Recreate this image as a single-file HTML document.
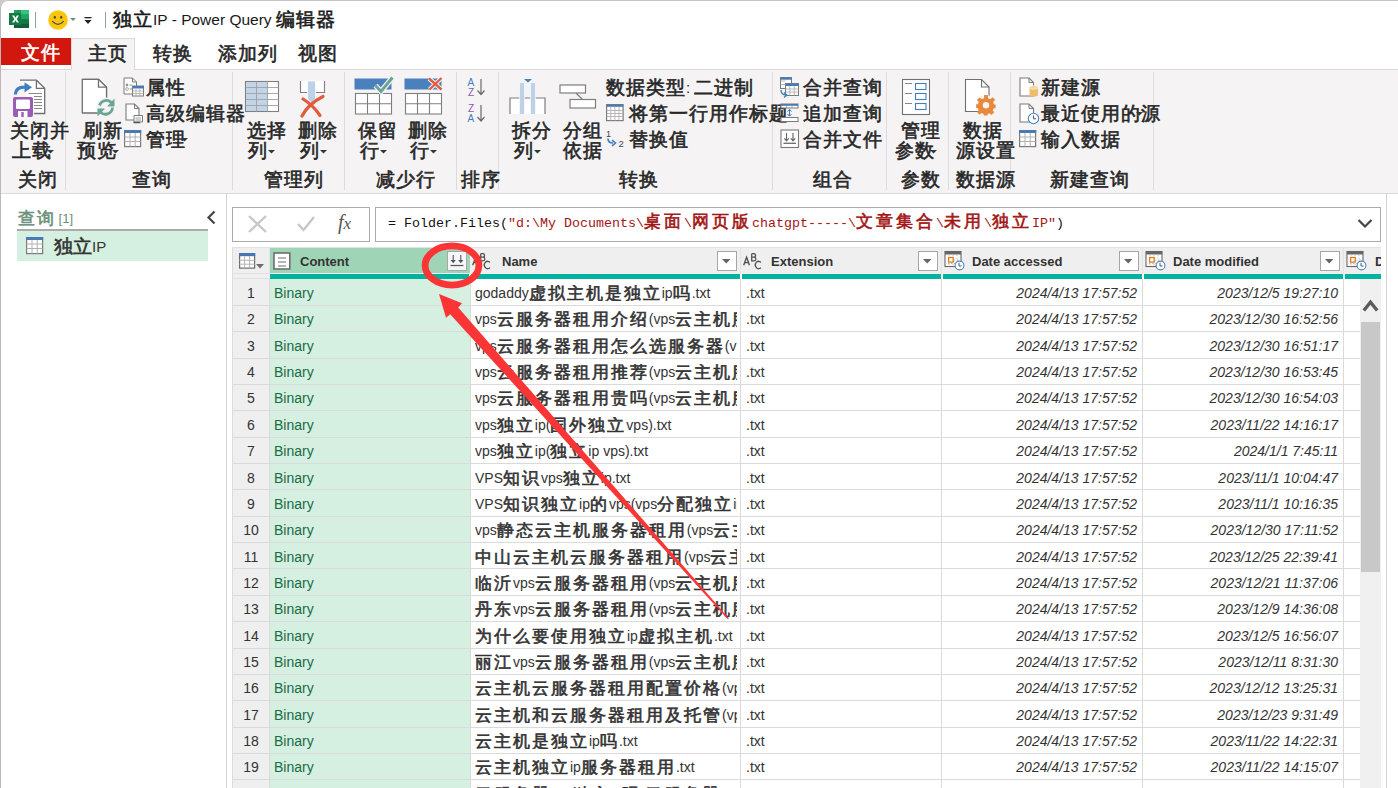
<!DOCTYPE html>
<html><head><meta charset="utf-8"><title>Power Query</title>
<style>
html,body{margin:0;padding:0;width:1398px;height:788px;overflow:hidden;background:#fff}
body{position:relative;font-family:"Liberation Sans",sans-serif}
svg{display:block}
</style></head><body>
<div style="position:absolute;left:0;top:0;width:12px;height:12px;background:#c9c9c9"></div>
<div style="position:absolute;left:0;top:0;width:1398px;height:788px;background:#fff;border-top-left-radius:8px"></div>
<svg style="position:absolute;left:9px;top:10px;" width="21" height="19" viewBox="0 0 21 19">
<rect x="5" y="0" width="15" height="18" fill="#1e9e5c"/>
<rect x="12" y="0" width="8" height="4.5" fill="#33c481"/>
<rect x="12" y="4.5" width="8" height="4.5" fill="#21a366"/>
<rect x="12" y="9" width="8" height="4.5" fill="#107c41"/>
<rect x="5" y="13.5" width="15" height="4.5" fill="#185c37"/>
<rect x="0" y="3" width="12" height="12" fill="#107c41"/>
<path d="M3 5.5h2.2l1.3 2.3 1.3-2.3h2.2l-2.3 3.5 2.3 3.5h-2.2l-1.3-2.3-1.3 2.3h-2.2l2.3-3.5z" fill="#fff"/>
</svg>
<div style="position:absolute;left:35px;top:12px;width:1px;height:16px;background:#8aa39a"></div>
<svg style="position:absolute;left:48px;top:10px;" width="30" height="21" viewBox="0 0 30 21">
<circle cx="10" cy="10" r="9.8" fill="#fdc60e"/>
<ellipse cx="6.8" cy="7.2" rx="1.1" ry="1.5" fill="#4a4a4a"/>
<ellipse cx="13.2" cy="7.2" rx="1.1" ry="1.5" fill="#4a4a4a"/>
<path d="M4.2 11.2 Q10 17.5 15.8 11.2" stroke="#4a4a4a" stroke-width="1.2" fill="none"/>
<path d="M22 8h6l-3 3z" fill="#6f8f80"/>
</svg>
<svg style="position:absolute;left:84px;top:16px;" width="9" height="9" viewBox="0 0 9 9"><rect x="0.5" y="1" width="7" height="1.3" fill="#222"/><path d="M0.5 4H7.5L4 8Z" fill="#222"/></svg>
<div style="position:absolute;left:105px;top:12px;width:1px;height:16px;background:#8aa39a"></div>
<div style="position:absolute;left:113px;top:12px;white-space:nowrap;font-size:15.5px;line-height:15.5px;color:#1a1a1a;"><span style="font-family:'Liberation Sans',sans-serif;font-style:normal;font-size:18.6667px;line-height:0;letter-spacing:1.00px;vertical-align:-1px;-webkit-text-stroke:0.6px currentColor;">独立</span>IP - Power Query <span style="font-family:'Liberation Sans',sans-serif;font-style:normal;font-size:18.6667px;line-height:0;letter-spacing:1.00px;vertical-align:-1px;-webkit-text-stroke:0.6px currentColor;">编辑器</span></div>
<div style="position:absolute;left:1px;top:38px;width:70px;height:27px;background:#d2170f"></div>
<div style="position:absolute;left:21px;top:45px;white-space:nowrap;font-size:15px;line-height:15px;color:#fff;"><span style="font-family:'Liberation Sans',sans-serif;font-style:normal;font-size:18.6667px;line-height:0;letter-spacing:1.00px;vertical-align:-1px;-webkit-text-stroke:0.6px currentColor;">文件</span></div>
<div style="position:absolute;left:71px;top:38px;width:64px;height:32px;background:#f5f3f4;border:1px solid #dadada;border-bottom:none;box-sizing:border-box"></div>
<div style="position:absolute;left:88px;top:46px;white-space:nowrap;font-size:15px;line-height:15px;color:#262626;"><span style="font-family:'Liberation Sans',sans-serif;font-style:normal;font-size:18.6667px;line-height:0;letter-spacing:1.00px;vertical-align:-1px;-webkit-text-stroke:0.6px currentColor;">主页</span></div>
<div style="position:absolute;left:153px;top:46px;white-space:nowrap;font-size:15px;line-height:15px;color:#262626;"><span style="font-family:'Liberation Sans',sans-serif;font-style:normal;font-size:18.6667px;line-height:0;letter-spacing:1.00px;vertical-align:-1px;-webkit-text-stroke:0.6px currentColor;">转换</span></div>
<div style="position:absolute;left:218px;top:46px;white-space:nowrap;font-size:15px;line-height:15px;color:#262626;"><span style="font-family:'Liberation Sans',sans-serif;font-style:normal;font-size:18.6667px;line-height:0;letter-spacing:1.00px;vertical-align:-1px;-webkit-text-stroke:0.6px currentColor;">添加列</span></div>
<div style="position:absolute;left:298px;top:46px;white-space:nowrap;font-size:15px;line-height:15px;color:#262626;"><span style="font-family:'Liberation Sans',sans-serif;font-style:normal;font-size:18.6667px;line-height:0;letter-spacing:1.00px;vertical-align:-1px;-webkit-text-stroke:0.6px currentColor;">视图</span></div>
<div style="position:absolute;left:0px;top:69px;width:1398px;height:125px;background:#f5f3f4;border-top:1px solid #dadada;border-bottom:1px solid #dadada;box-sizing:border-box"></div>
<div style="position:absolute;left:71px;top:69px;width:64px;height:1px;background:#f5f3f4;border-left:1px solid #dadada;border-right:1px solid #dadada;box-sizing:border-box"></div>
<div style="position:absolute;left:65px;top:72px;width:1px;height:118px;background:#dddbdc"></div>
<div style="position:absolute;left:232px;top:72px;width:1px;height:118px;background:#dddbdc"></div>
<div style="position:absolute;left:344px;top:72px;width:1px;height:118px;background:#dddbdc"></div>
<div style="position:absolute;left:456px;top:72px;width:1px;height:118px;background:#dddbdc"></div>
<div style="position:absolute;left:498px;top:72px;width:1px;height:118px;background:#dddbdc"></div>
<div style="position:absolute;left:772px;top:72px;width:1px;height:118px;background:#dddbdc"></div>
<div style="position:absolute;left:886px;top:72px;width:1px;height:118px;background:#dddbdc"></div>
<div style="position:absolute;left:948px;top:72px;width:1px;height:118px;background:#dddbdc"></div>
<div style="position:absolute;left:1010px;top:72px;width:1px;height:118px;background:#dddbdc"></div>
<div style="position:absolute;left:1153px;top:72px;width:1px;height:118px;background:#dddbdc"></div>
<div style="position:absolute;left:18px;top:172px;white-space:nowrap;font-size:15px;line-height:15px;color:#262626;"><span style="font-family:'Liberation Sans',sans-serif;font-style:normal;font-size:18.6667px;line-height:0;letter-spacing:1.00px;vertical-align:-1px;-webkit-text-stroke:0.6px currentColor;">关闭</span></div>
<div style="position:absolute;left:132px;top:172px;white-space:nowrap;font-size:15px;line-height:15px;color:#262626;"><span style="font-family:'Liberation Sans',sans-serif;font-style:normal;font-size:18.6667px;line-height:0;letter-spacing:1.00px;vertical-align:-1px;-webkit-text-stroke:0.6px currentColor;">查询</span></div>
<div style="position:absolute;left:264px;top:172px;white-space:nowrap;font-size:15px;line-height:15px;color:#262626;"><span style="font-family:'Liberation Sans',sans-serif;font-style:normal;font-size:18.6667px;line-height:0;letter-spacing:1.00px;vertical-align:-1px;-webkit-text-stroke:0.6px currentColor;">管理列</span></div>
<div style="position:absolute;left:376px;top:172px;white-space:nowrap;font-size:15px;line-height:15px;color:#262626;"><span style="font-family:'Liberation Sans',sans-serif;font-style:normal;font-size:18.6667px;line-height:0;letter-spacing:1.00px;vertical-align:-1px;-webkit-text-stroke:0.6px currentColor;">减少行</span></div>
<div style="position:absolute;left:461px;top:172px;white-space:nowrap;font-size:15px;line-height:15px;color:#262626;"><span style="font-family:'Liberation Sans',sans-serif;font-style:normal;font-size:18.6667px;line-height:0;letter-spacing:1.00px;vertical-align:-1px;-webkit-text-stroke:0.6px currentColor;">排序</span></div>
<div style="position:absolute;left:619px;top:172px;white-space:nowrap;font-size:15px;line-height:15px;color:#262626;"><span style="font-family:'Liberation Sans',sans-serif;font-style:normal;font-size:18.6667px;line-height:0;letter-spacing:1.00px;vertical-align:-1px;-webkit-text-stroke:0.6px currentColor;">转换</span></div>
<div style="position:absolute;left:813px;top:172px;white-space:nowrap;font-size:15px;line-height:15px;color:#262626;"><span style="font-family:'Liberation Sans',sans-serif;font-style:normal;font-size:18.6667px;line-height:0;letter-spacing:1.00px;vertical-align:-1px;-webkit-text-stroke:0.6px currentColor;">组合</span></div>
<div style="position:absolute;left:901px;top:172px;white-space:nowrap;font-size:15px;line-height:15px;color:#262626;"><span style="font-family:'Liberation Sans',sans-serif;font-style:normal;font-size:18.6667px;line-height:0;letter-spacing:1.00px;vertical-align:-1px;-webkit-text-stroke:0.6px currentColor;">参数</span></div>
<div style="position:absolute;left:956px;top:172px;white-space:nowrap;font-size:15px;line-height:15px;color:#262626;"><span style="font-family:'Liberation Sans',sans-serif;font-style:normal;font-size:18.6667px;line-height:0;letter-spacing:1.00px;vertical-align:-1px;-webkit-text-stroke:0.6px currentColor;">数据源</span></div>
<div style="position:absolute;left:1050px;top:172px;white-space:nowrap;font-size:15px;line-height:15px;color:#262626;"><span style="font-family:'Liberation Sans',sans-serif;font-style:normal;font-size:18.6667px;line-height:0;letter-spacing:1.00px;vertical-align:-1px;-webkit-text-stroke:0.6px currentColor;">新建查询</span></div>
<svg style="position:absolute;left:13px;top:79px;" width="34" height="40" viewBox="0 0 34 40">
<path d="M7 1.2H23.4L31.7 9.3V34.5H21" fill="#fff" stroke="#707070" stroke-width="1.3"/>
<path d="M23.4 1.2V9.3H31.7" fill="none" stroke="#707070" stroke-width="1.3"/>
<path d="M15.5 14.5H29M21 17.5H29M21 20.5H29M21 23.5H29M21 26.5H29M21 29.5H29" stroke="#8a8a8a" stroke-width="1"/>
<path d="M2.3 15.5 C2.5 10 7 8 12.5 8.2" stroke="#3f7fc0" stroke-width="3.2" fill="none"/>
<path d="M11.5 3.3 L19 8.3 L11.5 13.5 Z" fill="#3f7fc0"/>
<rect x="0" y="18" width="20" height="20" rx="2" fill="#9a5cb4"/>
<rect x="3" y="20.5" width="14" height="9.5" rx="1.3" fill="#fff"/>
<rect x="5" y="32" width="9.5" height="6" fill="#fff"/>
<rect x="8.3" y="33" width="2.4" height="5" fill="#9a5cb4"/>
</svg>
<div style="position:absolute;left:10px;top:123px;white-space:nowrap;font-size:15px;line-height:15px;color:#262626;"><span style="font-family:'Liberation Sans',sans-serif;font-style:normal;font-size:18.6667px;line-height:0;letter-spacing:1.00px;vertical-align:-1px;-webkit-text-stroke:0.6px currentColor;">关闭并</span></div>
<div style="position:absolute;left:12px;top:143px;white-space:nowrap;font-size:15px;line-height:15px;color:#262626;"><span style="font-family:'Liberation Sans',sans-serif;font-style:normal;font-size:18.6667px;line-height:0;letter-spacing:1.00px;vertical-align:-1px;-webkit-text-stroke:0.6px currentColor;">上载</span></div>
<svg style="position:absolute;left:47px;top:150px;" width="7" height="4" viewBox="0 0 7 4"><path d="M0 0H7L3.5 3.5Z" fill="#2c3b33"/></svg>
<svg style="position:absolute;left:81px;top:78px;" width="36" height="42" viewBox="0 0 36 42">
<path d="M1.3 1.3H17.5L25.5 9.2V27.5M17 34.9H1.3Z" fill="#fff" stroke="#707070" stroke-width="1.3"/>
<path d="M1.3 1.3H17.5L25.5 9.2V34.9H1.3Z" fill="#fff" stroke="#707070" stroke-width="1.3"/>
<path d="M17.5 1.3V9.2H25.5" fill="none" stroke="#707070" stroke-width="1.3"/>
<circle cx="25" cy="29.5" r="10" fill="#f5f3f4"/>
<path d="M18.5 27.5 A7 7 0 0 1 31 25.5" stroke="#6aa596" stroke-width="2.8" fill="none"/>
<path d="M31.5 29.5 A7 7 0 0 1 19 33.5" stroke="#6aa596" stroke-width="2.8" fill="none"/>
<path d="M33.5 20.5V28.5H26Z" fill="#6aa596"/>
<path d="M16.5 38.5V30.5H24Z" fill="#6aa596"/>
</svg>
<div style="position:absolute;left:83px;top:123px;white-space:nowrap;font-size:15px;line-height:15px;color:#262626;"><span style="font-family:'Liberation Sans',sans-serif;font-style:normal;font-size:18.6667px;line-height:0;letter-spacing:1.00px;vertical-align:-1px;-webkit-text-stroke:0.6px currentColor;">刷新</span></div>
<div style="position:absolute;left:77px;top:143px;white-space:nowrap;font-size:15px;line-height:15px;color:#262626;"><span style="font-family:'Liberation Sans',sans-serif;font-style:normal;font-size:18.6667px;line-height:0;letter-spacing:1.00px;vertical-align:-1px;-webkit-text-stroke:0.6px currentColor;">预览</span></div>
<svg style="position:absolute;left:112px;top:150px;" width="7" height="4" viewBox="0 0 7 4"><path d="M0 0H7L3.5 3.5Z" fill="#2c3b33"/></svg>
<svg style="position:absolute;left:123px;top:77px;" width="22" height="20" viewBox="0 0 22 20">
<path d="M1 1H9.5L13.5 5V17H1Z" fill="#fff" stroke="#7a7a7a" stroke-width="1"/>
<path d="M9.5 1V5H13.5" fill="none" stroke="#7a7a7a"/>
<circle cx="4" cy="8" r="1.4" fill="#999"/><circle cx="4" cy="12" r="1.4" fill="none" stroke="#999" stroke-width=".8"/>
<path d="M6.5 8H9M6.5 12H9" stroke="#999"/>
<rect x="9.5" y="9" width="11" height="10" fill="#fff" stroke="#7a7a7a"/>
<rect x="9.5" y="9" width="11" height="2.5" fill="#4a7ab4"/>
<path d="M9.5 14H20.5M9.5 16.5H20.5M13 11.5V19M16.8 11.5V19" stroke="#aaa" stroke-width=".8"/>
</svg>
<div style="position:absolute;left:146px;top:80px;white-space:nowrap;font-size:15px;line-height:15px;color:#262626;"><span style="font-family:'Liberation Sans',sans-serif;font-style:normal;font-size:18.6667px;line-height:0;letter-spacing:1.00px;vertical-align:-1px;-webkit-text-stroke:0.6px currentColor;">属性</span></div>
<svg style="position:absolute;left:125px;top:103px;" width="20" height="21" viewBox="0 0 20 21">
<path d="M1 1H9.5L14 5.5V17H1Z" fill="#fff" stroke="#7a7a7a" stroke-width="1.1"/>
<path d="M9.5 1V5.5H14" fill="none" stroke="#7a7a7a"/>
<path d="M9 12.5H17.5V19H9Z" fill="#fff" stroke="#7a7a7a"/>
<path d="M10.5 15H16M10.5 17H16" stroke="#888" stroke-width=".8"/>
<path d="M8.5 19.5H15" stroke="#555" stroke-width="1.5"/>
</svg>
<div style="position:absolute;left:146px;top:106px;white-space:nowrap;font-size:15px;line-height:15px;color:#262626;"><span style="font-family:'Liberation Sans',sans-serif;font-style:normal;font-size:18.6667px;line-height:0;letter-spacing:1.00px;vertical-align:-1px;-webkit-text-stroke:0.6px currentColor;">高级编辑器</span></div>
<svg style="position:absolute;left:124px;top:130px;" width="19" height="18" viewBox="0 0 19 18">
<rect x="0.6" y="0.6" width="16" height="16" fill="#fff" stroke="#7a7a7a" stroke-width="1.2"/>
<rect x="0" y="0" width="17.2" height="3" fill="#4a7ab4"/>
<path d="M0.6 7H16.6M0.6 11.5H16.6M6 3V16.6M11.2 3V16.6" stroke="#b0b0b0" stroke-width="1"/>
</svg>
<div style="position:absolute;left:146px;top:132px;white-space:nowrap;font-size:15px;line-height:15px;color:#262626;"><span style="font-family:'Liberation Sans',sans-serif;font-style:normal;font-size:18.6667px;line-height:0;letter-spacing:1.00px;vertical-align:-1px;-webkit-text-stroke:0.6px currentColor;">管理</span></div>
<svg style="position:absolute;left:181px;top:138px;" width="7" height="4" viewBox="0 0 7 4"><path d="M0 0H7L3.5 3.5Z" fill="#2c3b33"/></svg>
<svg style="position:absolute;left:244px;top:80px;" width="37" height="33" viewBox="0 0 37 33">
<rect x="1.5" y="1.5" width="33" height="30" fill="#fff" stroke="#7f7f7f" stroke-width="1.1"/>
<rect x="2" y="2" width="21.5" height="29" fill="#c2d5e8"/>
<path d="M1.5 7.5H34.5M1.5 13.5H34.5M1.5 19.5H34.5M1.5 25.5H34.5M12.5 1.5V31.5M23.5 1.5V31.5" stroke="#a0a0a0" stroke-width=".9"/>
</svg>
<div style="position:absolute;left:247px;top:123px;white-space:nowrap;font-size:15px;line-height:15px;color:#262626;"><span style="font-family:'Liberation Sans',sans-serif;font-style:normal;font-size:18.6667px;line-height:0;letter-spacing:1.00px;vertical-align:-1px;-webkit-text-stroke:0.6px currentColor;">选择</span></div>
<div style="position:absolute;left:248px;top:143px;white-space:nowrap;font-size:15px;line-height:15px;color:#262626;"><span style="font-family:'Liberation Sans',sans-serif;font-style:normal;font-size:18.6667px;line-height:0;letter-spacing:1.00px;vertical-align:-1px;-webkit-text-stroke:0.6px currentColor;">列</span></div>
<svg style="position:absolute;left:268px;top:150px;" width="7" height="4" viewBox="0 0 7 4"><path d="M0 0H7L3.5 3.5Z" fill="#2c3b33"/></svg>
<svg style="position:absolute;left:298px;top:80px;" width="30" height="39" viewBox="0 0 30 39">
<path d="M2.5 1V12.5H26.5V1" fill="#fff" stroke="#7f7f7f" stroke-width="1.1"/>
<path d="M9.5 1H17.5V19L13.5 23L9.5 19Z" fill="#bcd2e6" stroke="#fff" stroke-width=".8"/>
<path d="M4 36 C8 28 14 22 25 16.5" stroke="#e15c3f" stroke-width="3.2" fill="none" stroke-linecap="round"/>
<path d="M5 19 C10 22 17 28 22 35.5" stroke="#e15c3f" stroke-width="3.2" fill="none" stroke-linecap="round"/>
</svg>
<div style="position:absolute;left:298px;top:123px;white-space:nowrap;font-size:15px;line-height:15px;color:#262626;"><span style="font-family:'Liberation Sans',sans-serif;font-style:normal;font-size:18.6667px;line-height:0;letter-spacing:1.00px;vertical-align:-1px;-webkit-text-stroke:0.6px currentColor;">删除</span></div>
<div style="position:absolute;left:300px;top:143px;white-space:nowrap;font-size:15px;line-height:15px;color:#262626;"><span style="font-family:'Liberation Sans',sans-serif;font-style:normal;font-size:18.6667px;line-height:0;letter-spacing:1.00px;vertical-align:-1px;-webkit-text-stroke:0.6px currentColor;">列</span></div>
<svg style="position:absolute;left:320px;top:150px;" width="7" height="4" viewBox="0 0 7 4"><path d="M0 0H7L3.5 3.5Z" fill="#2c3b33"/></svg>
<svg style="position:absolute;left:354px;top:76px;" width="41" height="40" viewBox="0 0 41 40">
<rect x="1.5" y="17.5" width="36" height="20.5" fill="#fff" stroke="#7f7f7f" stroke-width="1.1"/>
<path d="M1.5 27.7H37.5M13.5 17.5V38M25.5 17.5V38" stroke="#7f7f7f" stroke-width="1.1"/>
<rect x="0.5" y="2.5" width="37" height="11" fill="#4a80bd"/>
<path d="M21.5 9.5 L27 15.5 L38.5 1.5" stroke="#f5f3f4" stroke-width="5.5" fill="none"/>
<path d="M21.5 9.5 L27 15.5 L38.5 1.5" stroke="#6aa596" stroke-width="3" fill="none"/>
</svg>
<div style="position:absolute;left:358px;top:123px;white-space:nowrap;font-size:15px;line-height:15px;color:#262626;"><span style="font-family:'Liberation Sans',sans-serif;font-style:normal;font-size:18.6667px;line-height:0;letter-spacing:1.00px;vertical-align:-1px;-webkit-text-stroke:0.6px currentColor;">保留</span></div>
<div style="position:absolute;left:360px;top:143px;white-space:nowrap;font-size:15px;line-height:15px;color:#262626;"><span style="font-family:'Liberation Sans',sans-serif;font-style:normal;font-size:18.6667px;line-height:0;letter-spacing:1.00px;vertical-align:-1px;-webkit-text-stroke:0.6px currentColor;">行</span></div>
<svg style="position:absolute;left:380px;top:150px;" width="7" height="4" viewBox="0 0 7 4"><path d="M0 0H7L3.5 3.5Z" fill="#2c3b33"/></svg>
<svg style="position:absolute;left:404px;top:76px;" width="40" height="40" viewBox="0 0 40 40">
<rect x="1.5" y="17.5" width="36" height="20.5" fill="#fff" stroke="#7f7f7f" stroke-width="1.1"/>
<path d="M1.5 27.7H37.5M13.5 17.5V38M25.5 17.5V38" stroke="#7f7f7f" stroke-width="1.1"/>
<rect x="0.5" y="2.5" width="37" height="11" fill="#4a80bd"/>
<path d="M25.5 13.5 L37.5 2M25 2.5 L37.5 13.5" stroke="#f5f3f4" stroke-width="4.5" fill="none"/>
<path d="M25.5 13.5 L37.5 2M25 2.5 L37.5 13.5" stroke="#e15c3f" stroke-width="2.4" fill="none"/>
</svg>
<div style="position:absolute;left:408px;top:123px;white-space:nowrap;font-size:15px;line-height:15px;color:#262626;"><span style="font-family:'Liberation Sans',sans-serif;font-style:normal;font-size:18.6667px;line-height:0;letter-spacing:1.00px;vertical-align:-1px;-webkit-text-stroke:0.6px currentColor;">删除</span></div>
<div style="position:absolute;left:410px;top:143px;white-space:nowrap;font-size:15px;line-height:15px;color:#262626;"><span style="font-family:'Liberation Sans',sans-serif;font-style:normal;font-size:18.6667px;line-height:0;letter-spacing:1.00px;vertical-align:-1px;-webkit-text-stroke:0.6px currentColor;">行</span></div>
<svg style="position:absolute;left:430px;top:150px;" width="7" height="4" viewBox="0 0 7 4"><path d="M0 0H7L3.5 3.5Z" fill="#2c3b33"/></svg>
<svg style="position:absolute;left:466px;top:76px;" width="22" height="48" viewBox="0 0 22 48">
<text x="1.5" y="10" font-family="Liberation Sans" font-size="10" fill="#3f7fc0">A</text>
<text x="2" y="19.5" font-family="Liberation Sans" font-size="10" fill="#8d58b0">Z</text>
<path d="M15 3V18M11.5 14.5L15 18.5L18.5 14.5" stroke="#6a6a6a" stroke-width="1.2" fill="none"/>
<text x="2" y="36" font-family="Liberation Sans" font-size="10" fill="#8d58b0">Z</text>
<text x="1.5" y="45.5" font-family="Liberation Sans" font-size="10" fill="#3f7fc0">A</text>
<path d="M15 29V44.5M11.5 41L15 45L18.5 41" stroke="#6a6a6a" stroke-width="1.2" fill="none"/>
</svg>
<svg style="position:absolute;left:509px;top:78px;" width="39" height="38" viewBox="0 0 39 38">
<path d="M1 36V20H36V36" fill="#fff" stroke="#7f7f7f" stroke-width="1.2"/>
<rect x="10.5" y="5" width="5" height="31" fill="#bdd2e6"/>
<rect x="21.5" y="5" width="5" height="31" fill="#bdd2e6"/>
<path d="M10.5 5V36M15.5 5V36M21.5 5V36M26.5 5V36" stroke="#fff" stroke-width=".6"/>
<path d="M15 1H23L19 4.5Z" fill="#3f7fc0"/>
</svg>
<div style="position:absolute;left:512px;top:123px;white-space:nowrap;font-size:15px;line-height:15px;color:#262626;"><span style="font-family:'Liberation Sans',sans-serif;font-style:normal;font-size:18.6667px;line-height:0;letter-spacing:1.00px;vertical-align:-1px;-webkit-text-stroke:0.6px currentColor;">拆分</span></div>
<div style="position:absolute;left:514px;top:143px;white-space:nowrap;font-size:15px;line-height:15px;color:#262626;"><span style="font-family:'Liberation Sans',sans-serif;font-style:normal;font-size:18.6667px;line-height:0;letter-spacing:1.00px;vertical-align:-1px;-webkit-text-stroke:0.6px currentColor;">列</span></div>
<svg style="position:absolute;left:534px;top:150px;" width="7" height="4" viewBox="0 0 7 4"><path d="M0 0H7L3.5 3.5Z" fill="#2c3b33"/></svg>
<svg style="position:absolute;left:559px;top:84px;" width="39" height="28" viewBox="0 0 39 28">
<rect x="1" y="1" width="25.5" height="8" fill="#fff" stroke="#7f7f7f" stroke-width="1.2"/>
<rect x="11" y="15.5" width="25.5" height="8.5" fill="#fff" stroke="#7f7f7f" stroke-width="1.2"/>
<path d="M17 9L23.5 15.5" stroke="#7f7f7f" stroke-width="1.2"/>
</svg>
<div style="position:absolute;left:563px;top:123px;white-space:nowrap;font-size:15px;line-height:15px;color:#262626;"><span style="font-family:'Liberation Sans',sans-serif;font-style:normal;font-size:18.6667px;line-height:0;letter-spacing:1.00px;vertical-align:-1px;-webkit-text-stroke:0.6px currentColor;">分组</span></div>
<div style="position:absolute;left:563px;top:143px;white-space:nowrap;font-size:15px;line-height:15px;color:#262626;"><span style="font-family:'Liberation Sans',sans-serif;font-style:normal;font-size:18.6667px;line-height:0;letter-spacing:1.00px;vertical-align:-1px;-webkit-text-stroke:0.6px currentColor;">依据</span></div>
<div style="position:absolute;left:606px;top:80px;white-space:nowrap;font-size:15px;line-height:15px;color:#262626;"><span style="font-family:'Liberation Sans',sans-serif;font-style:normal;font-size:18.6667px;line-height:0;letter-spacing:1.00px;vertical-align:-1px;-webkit-text-stroke:0.6px currentColor;">数据类型</span>: <span style="font-family:'Liberation Sans',sans-serif;font-style:normal;font-size:18.6667px;line-height:0;letter-spacing:1.00px;vertical-align:-1px;-webkit-text-stroke:0.6px currentColor;">二进制</span></div>
<svg style="position:absolute;left:723px;top:86px;" width="7" height="4" viewBox="0 0 7 4"><path d="M0 0H7L3.5 3.5Z" fill="#2c3b33"/></svg>
<svg style="position:absolute;left:606px;top:104px;" width="19" height="18" viewBox="0 0 19 18">
<rect x="0.6" y="0.6" width="16.5" height="16" fill="#fff" stroke="#7a7a7a" stroke-width="1.2"/>
<rect x="0.6" y="0.6" width="16.5" height="2.2" fill="#4a7ab4"/>
<path d="M0.6 6.5H17M0.6 9.5H17M0.6 12.5H17M4.8 2.8V16.6M8.9 2.8V16.6M13 2.8V16.6" stroke="#b0b0b0" stroke-width=".9"/>
</svg>
<div style="position:absolute;left:629px;top:106px;white-space:nowrap;font-size:15px;line-height:15px;color:#262626;"><span style="font-family:'Liberation Sans',sans-serif;font-style:normal;font-size:18.6667px;line-height:0;letter-spacing:1.00px;vertical-align:-1px;-webkit-text-stroke:0.6px currentColor;">将第一行用作标题</span></div>
<svg style="position:absolute;left:755px;top:112px;" width="7" height="4" viewBox="0 0 7 4"><path d="M0 0H7L3.5 3.5Z" fill="#2c3b33"/></svg>
<svg style="position:absolute;left:605px;top:128px;" width="22" height="22" viewBox="0 0 22 22">
<text x="1" y="9" font-family="Liberation Sans" font-size="9" fill="#444">1</text>
<text x="13.5" y="19" font-family="Liberation Sans" font-size="9.5" fill="#444">2</text>
<path d="M3 10.5 Q3 15 8 15" stroke="#3f7fc0" stroke-width="1.6" fill="none"/>
<path d="M7 12.2L10.5 15L7 17.8" stroke="#3f7fc0" stroke-width="1.6" fill="none"/>
</svg>
<div style="position:absolute;left:629px;top:132px;white-space:nowrap;font-size:15px;line-height:15px;color:#262626;"><span style="font-family:'Liberation Sans',sans-serif;font-style:normal;font-size:18.6667px;line-height:0;letter-spacing:1.00px;vertical-align:-1px;-webkit-text-stroke:0.6px currentColor;">替换值</span></div>
<svg style="position:absolute;left:779px;top:77px;" width="22" height="22" viewBox="0 0 22 22">
<rect x="1.5" y="0.5" width="11" height="11" fill="#fff" stroke="#7a7a7a"/>
<rect x="1.5" y="0.5" width="11" height="2.2" fill="#4a7ab4"/>
<rect x="6.5" y="6.5" width="13" height="12" fill="#fff" stroke="#7a7a7a"/>
<rect x="6.5" y="6.5" width="13" height="2.5" fill="#4a7ab4"/>
<path d="M6.5 12H19.5M6.5 15H19.5M10.8 9V18.5M15.2 9V18.5M1.5 4H6.5M1.5 7.5H6.5" stroke="#aaa" stroke-width=".8"/>
<path d="M2 13 Q2 18 7 18" stroke="#3f7fc0" stroke-width="1.4" fill="none"/>
<path d="M5 15.5L7.8 18L5 20.5" stroke="#3f7fc0" stroke-width="1.4" fill="none"/>
</svg>
<div style="position:absolute;left:803px;top:80px;white-space:nowrap;font-size:15px;line-height:15px;color:#262626;"><span style="font-family:'Liberation Sans',sans-serif;font-style:normal;font-size:18.6667px;line-height:0;letter-spacing:1.00px;vertical-align:-1px;-webkit-text-stroke:0.6px currentColor;">合并查询</span></div>
<svg style="position:absolute;left:869px;top:86px;" width="7" height="4" viewBox="0 0 7 4"><path d="M0 0H7L3.5 3.5Z" fill="#2c3b33"/></svg>
<svg style="position:absolute;left:780px;top:103px;" width="21" height="21" viewBox="0 0 21 21">
<rect x="1" y="1" width="17" height="4" fill="#fff" stroke="#7a7a7a"/>
<rect x="1" y="1" width="17" height="1.8" fill="#4a7ab4"/>
<path d="M6.5 2.8V5M12 2.8V5M6.5 15V18M12 15V18" stroke="#999" stroke-width=".8"/>
<rect x="1" y="14.5" width="17" height="4" fill="#fff" stroke="#7a7a7a"/>
<path d="M9.5 6.5V13M7.5 8.5L9.5 6.3L11.5 8.5M7.5 11L9.5 13.2L11.5 11" stroke="#3f7fc0" stroke-width="1" fill="none"/>
</svg>
<div style="position:absolute;left:803px;top:106px;white-space:nowrap;font-size:15px;line-height:15px;color:#262626;"><span style="font-family:'Liberation Sans',sans-serif;font-style:normal;font-size:18.6667px;line-height:0;letter-spacing:1.00px;vertical-align:-1px;-webkit-text-stroke:0.6px currentColor;">追加查询</span></div>
<svg style="position:absolute;left:869px;top:112px;" width="7" height="4" viewBox="0 0 7 4"><path d="M0 0H7L3.5 3.5Z" fill="#2c3b33"/></svg>
<svg style="position:absolute;left:780px;top:129px;" width="21" height="21" viewBox="0 0 21 21">
<rect x="1" y="1" width="17.5" height="17.5" fill="#fff" stroke="#7a7a7a" stroke-width="1.1"/>
<path d="M6.5 4V11.5M4.3 9.3L6.5 11.8L8.7 9.3M13 4V11.5M10.8 9.3L13 11.8L15.2 9.3" stroke="#6a6a6a" stroke-width="1.2" fill="none"/>
<path d="M3.5 14.3H16" stroke="#6a6a6a" stroke-width="1.3"/>
</svg>
<div style="position:absolute;left:803px;top:132px;white-space:nowrap;font-size:15px;line-height:15px;color:#262626;"><span style="font-family:'Liberation Sans',sans-serif;font-style:normal;font-size:18.6667px;line-height:0;letter-spacing:1.00px;vertical-align:-1px;-webkit-text-stroke:0.6px currentColor;">合并文件</span></div>
<svg style="position:absolute;left:901px;top:78px;" width="31" height="39" viewBox="0 0 31 39">
<rect x="1.5" y="1.5" width="27" height="35" fill="#fff" stroke="#707070" stroke-width="1.1"/>
<path d="M4 5.5H11M4 15.5H11M4 25.5H11" stroke="#888" stroke-width="1"/>
<rect x="14.5" y="5.5" width="10.5" height="6" fill="#fff" stroke="#3f7fc0" stroke-width="1.1"/>
<rect x="14.5" y="15.5" width="10.5" height="6" fill="#fff" stroke="#3f7fc0" stroke-width="1.1"/>
<rect x="14.5" y="25.5" width="10.5" height="6" fill="#fff" stroke="#3f7fc0" stroke-width="1.1"/>
</svg>
<div style="position:absolute;left:901px;top:123px;white-space:nowrap;font-size:15px;line-height:15px;color:#262626;"><span style="font-family:'Liberation Sans',sans-serif;font-style:normal;font-size:18.6667px;line-height:0;letter-spacing:1.00px;vertical-align:-1px;-webkit-text-stroke:0.6px currentColor;">管理</span></div>
<div style="position:absolute;left:895px;top:143px;white-space:nowrap;font-size:15px;line-height:15px;color:#262626;"><span style="font-family:'Liberation Sans',sans-serif;font-style:normal;font-size:18.6667px;line-height:0;letter-spacing:1.00px;vertical-align:-1px;-webkit-text-stroke:0.6px currentColor;">参数</span></div>
<svg style="position:absolute;left:930px;top:150px;" width="7" height="4" viewBox="0 0 7 4"><path d="M0 0H7L3.5 3.5Z" fill="#2c3b33"/></svg>
<svg style="position:absolute;left:964px;top:78px;" width="34" height="38" viewBox="0 0 34 38">
<path d="M1.5 1.5H17.5L25 9V33.5H1.5Z" fill="#fff" stroke="#707070" stroke-width="1.1"/>
<path d="M17.5 1.5V9H25" fill="none" stroke="#707070" stroke-width="1.1"/>
<g transform="translate(22 27)">
<circle r="10" fill="#f5f3f4"/>
<path d="M-1.6 -7.5H1.6V-4.8L3.6 -4L5.5 -5.8L7.7 -3.6L5.9 -1.7L6.6 0.3H8V3.5H6.4L5.6 5.4L6.9 6.8L4.6 9L3 7.6L1.3 8.3V9.5H-1.9V8.2L-3.8 7.4L-5.3 8.9L-7.5 6.6L-6.1 5.1L-6.9 3.3H-8.2V0.1H-6.7L-6 -1.7L-7.6 -3.4L-5.4 -5.6L-3.7 -4.2L-1.6 -4.9Z" fill="#e8883a" transform="translate(0 -0.9) scale(1.2)"/>
<circle cx="0" cy="0.3" r="3.2" fill="#f5f3f4"/>
</g>
</svg>
<div style="position:absolute;left:963px;top:123px;white-space:nowrap;font-size:15px;line-height:15px;color:#262626;"><span style="font-family:'Liberation Sans',sans-serif;font-style:normal;font-size:18.6667px;line-height:0;letter-spacing:1.00px;vertical-align:-1px;-webkit-text-stroke:0.6px currentColor;">数据</span></div>
<div style="position:absolute;left:956px;top:143px;white-space:nowrap;font-size:15px;line-height:15px;color:#262626;"><span style="font-family:'Liberation Sans',sans-serif;font-style:normal;font-size:18.6667px;line-height:0;letter-spacing:1.00px;vertical-align:-1px;-webkit-text-stroke:0.6px currentColor;">源设置</span></div>
<svg style="position:absolute;left:1019px;top:77px;" width="21" height="22" viewBox="0 0 21 22">
<path d="M1 1H10L14.5 5.5V19H1Z" fill="#fff" stroke="#7a7a7a" stroke-width="1.1"/>
<path d="M10 1V5.5H14.5" fill="none" stroke="#7a7a7a"/>
<path d="M10.5 10.5V18.5 Q14.5 21 19 18.5V10.5Z" fill="#ecbe6e"/>
<ellipse cx="14.75" cy="10.5" rx="4.25" ry="1.8" fill="#f5d596" stroke="#f5f3f4" stroke-width=".6"/>
</svg>
<div style="position:absolute;left:1041px;top:80px;white-space:nowrap;font-size:15px;line-height:15px;color:#262626;"><span style="font-family:'Liberation Sans',sans-serif;font-style:normal;font-size:18.6667px;line-height:0;letter-spacing:1.00px;vertical-align:-1px;-webkit-text-stroke:0.6px currentColor;">新建源</span></div>
<svg style="position:absolute;left:1091px;top:86px;" width="7" height="4" viewBox="0 0 7 4"><path d="M0 0H7L3.5 3.5Z" fill="#2c3b33"/></svg>
<svg style="position:absolute;left:1019px;top:103px;" width="22" height="22" viewBox="0 0 22 22">
<path d="M1 1H10L14.5 5.5V19H1Z" fill="#fff" stroke="#7a7a7a" stroke-width="1.1"/>
<path d="M10 1V5.5H14.5" fill="none" stroke="#7a7a7a"/>
<circle cx="14.5" cy="15.5" r="5.2" fill="#fff" stroke="#4a86c5" stroke-width="1.1"/>
<path d="M14.5 12.5V15.8H17" stroke="#555" stroke-width="1" fill="none"/>
</svg>
<div style="position:absolute;left:1041px;top:106px;white-space:nowrap;font-size:15px;line-height:15px;color:#262626;"><span style="font-family:'Liberation Sans',sans-serif;font-style:normal;font-size:18.6667px;line-height:0;letter-spacing:1.00px;vertical-align:-1px;-webkit-text-stroke:0.6px currentColor;">最近使用的源</span></div>
<svg style="position:absolute;left:1136px;top:112px;" width="7" height="4" viewBox="0 0 7 4"><path d="M0 0H7L3.5 3.5Z" fill="#2c3b33"/></svg>
<svg style="position:absolute;left:1019px;top:130px;" width="19" height="18" viewBox="0 0 19 18">
<rect x="0.6" y="0.6" width="16" height="16" fill="#fff" stroke="#7a7a7a" stroke-width="1.2"/>
<rect x="0" y="0" width="17.2" height="3" fill="#4a7ab4"/>
<path d="M0.6 7H16.6M0.6 11.5H16.6M6 3V16.6M11.2 3V16.6" stroke="#b0b0b0" stroke-width="1"/>
</svg>
<div style="position:absolute;left:1041px;top:132px;white-space:nowrap;font-size:15px;line-height:15px;color:#262626;"><span style="font-family:'Liberation Sans',sans-serif;font-style:normal;font-size:18.6667px;line-height:0;letter-spacing:1.00px;vertical-align:-1px;-webkit-text-stroke:0.6px currentColor;">输入数据</span></div>
<div style="position:absolute;left:226px;top:193px;width:1px;height:595px;background:#d4d4d4"></div>
<div style="position:absolute;left:1386px;top:193px;width:1px;height:595px;background:#d4d4d4"></div>
<div style="position:absolute;left:18px;top:212px;white-space:nowrap;font-size:13px;line-height:13px;color:#6a917c;"><span style="font-family:'Liberation Sans',sans-serif;font-style:normal;font-size:17.3333px;line-height:0;letter-spacing:1.50px;vertical-align:-1px;-webkit-text-stroke:0.6px currentColor;">查询</span> [1]</div>
<svg style="position:absolute;left:205px;top:210px;" width="12" height="15" viewBox="0 0 12 15"><path d="M9.5 1.5L3.5 7.5L9.5 13.5" stroke="#444" stroke-width="2.2" fill="none"/></svg>
<div style="position:absolute;left:17px;top:229px;width:191px;height:32px;background:#d5efe1;border-top:2px solid #ababab;box-sizing:border-box"></div>
<svg style="position:absolute;left:26px;top:237px;" width="19" height="18" viewBox="0 0 19 18">
<rect x="0.6" y="0.6" width="16" height="16" fill="#fff" stroke="#7a7a7a" stroke-width="1.2"/>
<rect x="0" y="0" width="17.2" height="3" fill="#4a7ab4"/>
<path d="M0.6 7H16.6M0.6 11.5H16.6M6 3V16.6M11.2 3V16.6" stroke="#b0b0b0" stroke-width="1"/>
</svg>
<div style="position:absolute;left:54px;top:239px;white-space:nowrap;font-size:15px;line-height:15px;color:#333;"><span style="font-family:'Liberation Sans',sans-serif;font-style:normal;font-size:18.6667px;line-height:0;letter-spacing:-0.00px;vertical-align:-1px;-webkit-text-stroke:0.6px currentColor;">独立</span>IP</div>
<div style="position:absolute;left:232px;top:207px;width:138px;height:35px;border:1px solid #ababab;box-sizing:border-box;background:#fff"></div>
<svg style="position:absolute;left:247px;top:214px;" width="22" height="20" viewBox="0 0 22 20"><path d="M2 2L19 18M19 2L2 18" stroke="#c6c6c6" stroke-width="2.3"/></svg>
<svg style="position:absolute;left:296px;top:214px;" width="20" height="19" viewBox="0 0 20 19"><path d="M2 10L7.5 16L18 3" stroke="#c6c6c6" stroke-width="2.3" fill="none"/></svg>
<div style="position:absolute;left:338px;top:210px;font-family:'Liberation Serif',serif;font-style:italic;font-size:20px;line-height:24px;color:#555">f<span style="font-size:17px">x</span></div>
<div style="position:absolute;left:375px;top:207px;width:1006px;height:35px;border:1px solid #ababab;box-sizing:border-box;background:#fff"></div>
<div style="position:absolute;left:388px;top:216px;white-space:nowrap;font-family:'Liberation Mono',monospace;font-size:13.33px;line-height:16px"><span style="color:#111">= Folder.Files(</span><span style="color:#a31515">"d:\My Documents\<span style="font-family:'Liberation Sans',sans-serif;font-style:normal;font-size:17.3333px;line-height:0;letter-spacing:3.00px;vertical-align:0px;-webkit-text-stroke:0.6px currentColor;">桌面</span>\<span style="font-family:'Liberation Sans',sans-serif;font-style:normal;font-size:17.3333px;line-height:0;letter-spacing:3.00px;vertical-align:0px;-webkit-text-stroke:0.6px currentColor;">网页版</span>chatgpt-----\<span style="font-family:'Liberation Sans',sans-serif;font-style:normal;font-size:17.3333px;line-height:0;letter-spacing:3.00px;vertical-align:0px;-webkit-text-stroke:0.6px currentColor;">文章集合</span>\<span style="font-family:'Liberation Sans',sans-serif;font-style:normal;font-size:17.3333px;line-height:0;letter-spacing:3.00px;vertical-align:0px;-webkit-text-stroke:0.6px currentColor;">未用</span>\<span style="font-family:'Liberation Sans',sans-serif;font-style:normal;font-size:17.3333px;line-height:0;letter-spacing:3.00px;vertical-align:0px;-webkit-text-stroke:0.6px currentColor;">独立</span>IP"</span><span style="color:#111">)</span></div>
<svg style="position:absolute;left:1357px;top:218px;" width="16" height="11" viewBox="0 0 16 11"><path d="M1.5 2L8 8.5L14.5 2" stroke="#444" stroke-width="2.2" fill="none"/></svg>
<div style="position:absolute;left:232px;top:247px;width:1149px;height:27px;background:#efefef;border-top:1px solid #e2e2e2;box-sizing:border-box"></div>
<div style="position:absolute;left:270px;top:248px;width:200px;height:25px;background:#9fd4b7"></div>
<div style="position:absolute;left:232px;top:274px;width:38px;height:514px;background:#efefef"></div>
<div style="position:absolute;left:270px;top:279px;width:200px;height:509px;background:#d5efe1"></div>
<div style="position:absolute;left:270px;top:274px;width:199px;height:5px;background:#01b39e"></div>
<div style="position:absolute;left:471px;top:274px;width:269px;height:5px;background:#01b39e"></div>
<div style="position:absolute;left:742px;top:274px;width:199px;height:5px;background:#01b39e"></div>
<div style="position:absolute;left:943px;top:274px;width:199px;height:5px;background:#01b39e"></div>
<div style="position:absolute;left:1144px;top:274px;width:199px;height:5px;background:#01b39e"></div>
<div style="position:absolute;left:1345px;top:274px;width:36px;height:5px;background:#01b39e"></div>
<div style="position:absolute;left:232px;top:273px;width:38px;height:1px;background:#e0e0e0"></div>
<div style="position:absolute;left:232px;top:278px;width:38px;height:1px;background:#e0e0e0"></div>
<div style="position:absolute;left:269px;top:248px;width:1px;height:26px;background:#e3e3e3"></div>
<div style="position:absolute;left:740px;top:248px;width:1px;height:26px;background:#e3e3e3"></div>
<div style="position:absolute;left:941px;top:248px;width:1px;height:26px;background:#e3e3e3"></div>
<div style="position:absolute;left:1142px;top:248px;width:1px;height:26px;background:#e3e3e3"></div>
<div style="position:absolute;left:1343px;top:248px;width:1px;height:26px;background:#e3e3e3"></div>
<div style="position:absolute;left:269px;top:279px;width:1px;height:509px;background:#dadada"></div>
<div style="position:absolute;left:470px;top:279px;width:1px;height:509px;background:#dadada"></div>
<div style="position:absolute;left:740px;top:279px;width:1px;height:509px;background:#dadada"></div>
<div style="position:absolute;left:941px;top:279px;width:1px;height:509px;background:#dadada"></div>
<div style="position:absolute;left:1142px;top:279px;width:1px;height:509px;background:#dadada"></div>
<div style="position:absolute;left:1343px;top:279px;width:1px;height:509px;background:#dadada"></div>
<div style="position:absolute;left:232px;top:305px;width:1128px;height:1px;background:#dadada"></div>
<div style="position:absolute;left:232px;top:331px;width:1128px;height:1px;background:#dadada"></div>
<div style="position:absolute;left:232px;top:358px;width:1128px;height:1px;background:#dadada"></div>
<div style="position:absolute;left:232px;top:384px;width:1128px;height:1px;background:#dadada"></div>
<div style="position:absolute;left:232px;top:410px;width:1128px;height:1px;background:#dadada"></div>
<div style="position:absolute;left:232px;top:437px;width:1128px;height:1px;background:#dadada"></div>
<div style="position:absolute;left:232px;top:463px;width:1128px;height:1px;background:#dadada"></div>
<div style="position:absolute;left:232px;top:489px;width:1128px;height:1px;background:#dadada"></div>
<div style="position:absolute;left:232px;top:516px;width:1128px;height:1px;background:#dadada"></div>
<div style="position:absolute;left:232px;top:542px;width:1128px;height:1px;background:#dadada"></div>
<div style="position:absolute;left:232px;top:568px;width:1128px;height:1px;background:#dadada"></div>
<div style="position:absolute;left:232px;top:595px;width:1128px;height:1px;background:#dadada"></div>
<div style="position:absolute;left:232px;top:621px;width:1128px;height:1px;background:#dadada"></div>
<div style="position:absolute;left:232px;top:648px;width:1128px;height:1px;background:#dadada"></div>
<div style="position:absolute;left:232px;top:674px;width:1128px;height:1px;background:#dadada"></div>
<div style="position:absolute;left:232px;top:700px;width:1128px;height:1px;background:#dadada"></div>
<div style="position:absolute;left:232px;top:727px;width:1128px;height:1px;background:#dadada"></div>
<div style="position:absolute;left:232px;top:753px;width:1128px;height:1px;background:#dadada"></div>
<div style="position:absolute;left:232px;top:779px;width:1128px;height:1px;background:#dadada"></div>
<div style="position:absolute;left:232px;top:806px;width:1128px;height:1px;background:#dadada"></div>
<div style="position:absolute;left:232px;top:285px;width:38px;text-align:center;font-size:14px;line-height:16px;color:#333">1</div>
<div style="position:absolute;left:274px;top:285px;white-space:nowrap;font-size:14px;line-height:16px;color:#1c6b45;">Binary</div>
<div style="position:absolute;left:475px;top:285px;white-space:nowrap;font-size:14px;line-height:16px;color:#333;width:262px;overflow:hidden">godaddy<span style="font-family:'Liberation Sans',sans-serif;font-style:normal;font-size:17.3333px;line-height:0;letter-spacing:2.00px;vertical-align:-1px;-webkit-text-stroke:0.6px currentColor;">虚拟主机是独立</span>ip<span style="font-family:'Liberation Sans',sans-serif;font-style:normal;font-size:17.3333px;line-height:0;letter-spacing:2.00px;vertical-align:-1px;-webkit-text-stroke:0.6px currentColor;">吗</span>.txt</div>
<div style="position:absolute;left:746px;top:285px;white-space:nowrap;font-size:14px;line-height:16px;color:#333;">.txt</div>
<div style="position:absolute;left:941px;top:285px;width:196px;text-align:right;font-size:14px;line-height:16px;color:#333;font-style:italic">2024/4/13 17:57:52</div>
<div style="position:absolute;left:1142px;top:285px;width:196px;text-align:right;font-size:14px;line-height:16px;color:#333;font-style:italic">2023/12/5 19:27:10</div>
<div style="position:absolute;left:232px;top:311px;width:38px;text-align:center;font-size:14px;line-height:16px;color:#333">2</div>
<div style="position:absolute;left:274px;top:311px;white-space:nowrap;font-size:14px;line-height:16px;color:#1c6b45;">Binary</div>
<div style="position:absolute;left:475px;top:311px;white-space:nowrap;font-size:14px;line-height:16px;color:#333;width:262px;overflow:hidden">vps<span style="font-family:'Liberation Sans',sans-serif;font-style:normal;font-size:17.3333px;line-height:0;letter-spacing:2.00px;vertical-align:-1px;-webkit-text-stroke:0.6px currentColor;">云服务器租用介绍</span>(vps<span style="font-family:'Liberation Sans',sans-serif;font-style:normal;font-size:17.3333px;line-height:0;letter-spacing:2.00px;vertical-align:-1px;-webkit-text-stroke:0.6px currentColor;">云主机服务</span>...</div>
<div style="position:absolute;left:746px;top:311px;white-space:nowrap;font-size:14px;line-height:16px;color:#333;">.txt</div>
<div style="position:absolute;left:941px;top:311px;width:196px;text-align:right;font-size:14px;line-height:16px;color:#333;font-style:italic">2024/4/13 17:57:52</div>
<div style="position:absolute;left:1142px;top:311px;width:196px;text-align:right;font-size:14px;line-height:16px;color:#333;font-style:italic">2023/12/30 16:52:56</div>
<div style="position:absolute;left:232px;top:338px;width:38px;text-align:center;font-size:14px;line-height:16px;color:#333">3</div>
<div style="position:absolute;left:274px;top:338px;white-space:nowrap;font-size:14px;line-height:16px;color:#1c6b45;">Binary</div>
<div style="position:absolute;left:475px;top:338px;white-space:nowrap;font-size:14px;line-height:16px;color:#333;width:262px;overflow:hidden">vps<span style="font-family:'Liberation Sans',sans-serif;font-style:normal;font-size:17.3333px;line-height:0;letter-spacing:2.00px;vertical-align:-1px;-webkit-text-stroke:0.6px currentColor;">云服务器租用怎么选服务器</span>(vps<span style="font-family:'Liberation Sans',sans-serif;font-style:normal;font-size:17.3333px;line-height:0;letter-spacing:2.00px;vertical-align:-1px;-webkit-text-stroke:0.6px currentColor;">云</span>...</div>
<div style="position:absolute;left:746px;top:338px;white-space:nowrap;font-size:14px;line-height:16px;color:#333;">.txt</div>
<div style="position:absolute;left:941px;top:338px;width:196px;text-align:right;font-size:14px;line-height:16px;color:#333;font-style:italic">2024/4/13 17:57:52</div>
<div style="position:absolute;left:1142px;top:338px;width:196px;text-align:right;font-size:14px;line-height:16px;color:#333;font-style:italic">2023/12/30 16:51:17</div>
<div style="position:absolute;left:232px;top:364px;width:38px;text-align:center;font-size:14px;line-height:16px;color:#333">4</div>
<div style="position:absolute;left:274px;top:364px;white-space:nowrap;font-size:14px;line-height:16px;color:#1c6b45;">Binary</div>
<div style="position:absolute;left:475px;top:364px;white-space:nowrap;font-size:14px;line-height:16px;color:#333;width:262px;overflow:hidden">vps<span style="font-family:'Liberation Sans',sans-serif;font-style:normal;font-size:17.3333px;line-height:0;letter-spacing:2.00px;vertical-align:-1px;-webkit-text-stroke:0.6px currentColor;">云服务器租用推荐</span>(vps<span style="font-family:'Liberation Sans',sans-serif;font-style:normal;font-size:17.3333px;line-height:0;letter-spacing:2.00px;vertical-align:-1px;-webkit-text-stroke:0.6px currentColor;">云主机服务</span>...</div>
<div style="position:absolute;left:746px;top:364px;white-space:nowrap;font-size:14px;line-height:16px;color:#333;">.txt</div>
<div style="position:absolute;left:941px;top:364px;width:196px;text-align:right;font-size:14px;line-height:16px;color:#333;font-style:italic">2024/4/13 17:57:52</div>
<div style="position:absolute;left:1142px;top:364px;width:196px;text-align:right;font-size:14px;line-height:16px;color:#333;font-style:italic">2023/12/30 16:53:45</div>
<div style="position:absolute;left:232px;top:390px;width:38px;text-align:center;font-size:14px;line-height:16px;color:#333">5</div>
<div style="position:absolute;left:274px;top:390px;white-space:nowrap;font-size:14px;line-height:16px;color:#1c6b45;">Binary</div>
<div style="position:absolute;left:475px;top:390px;white-space:nowrap;font-size:14px;line-height:16px;color:#333;width:262px;overflow:hidden">vps<span style="font-family:'Liberation Sans',sans-serif;font-style:normal;font-size:17.3333px;line-height:0;letter-spacing:2.00px;vertical-align:-1px;-webkit-text-stroke:0.6px currentColor;">云服务器租用贵吗</span>(vps<span style="font-family:'Liberation Sans',sans-serif;font-style:normal;font-size:17.3333px;line-height:0;letter-spacing:2.00px;vertical-align:-1px;-webkit-text-stroke:0.6px currentColor;">云主机服务</span>...</div>
<div style="position:absolute;left:746px;top:390px;white-space:nowrap;font-size:14px;line-height:16px;color:#333;">.txt</div>
<div style="position:absolute;left:941px;top:390px;width:196px;text-align:right;font-size:14px;line-height:16px;color:#333;font-style:italic">2024/4/13 17:57:52</div>
<div style="position:absolute;left:1142px;top:390px;width:196px;text-align:right;font-size:14px;line-height:16px;color:#333;font-style:italic">2023/12/30 16:54:03</div>
<div style="position:absolute;left:232px;top:417px;width:38px;text-align:center;font-size:14px;line-height:16px;color:#333">6</div>
<div style="position:absolute;left:274px;top:417px;white-space:nowrap;font-size:14px;line-height:16px;color:#1c6b45;">Binary</div>
<div style="position:absolute;left:475px;top:417px;white-space:nowrap;font-size:14px;line-height:16px;color:#333;width:262px;overflow:hidden">vps<span style="font-family:'Liberation Sans',sans-serif;font-style:normal;font-size:17.3333px;line-height:0;letter-spacing:2.00px;vertical-align:-1px;-webkit-text-stroke:0.6px currentColor;">独立</span>ip(<span style="font-family:'Liberation Sans',sans-serif;font-style:normal;font-size:17.3333px;line-height:0;letter-spacing:2.00px;vertical-align:-1px;-webkit-text-stroke:0.6px currentColor;">国外独立</span>vps).txt</div>
<div style="position:absolute;left:746px;top:417px;white-space:nowrap;font-size:14px;line-height:16px;color:#333;">.txt</div>
<div style="position:absolute;left:941px;top:417px;width:196px;text-align:right;font-size:14px;line-height:16px;color:#333;font-style:italic">2024/4/13 17:57:52</div>
<div style="position:absolute;left:1142px;top:417px;width:196px;text-align:right;font-size:14px;line-height:16px;color:#333;font-style:italic">2023/11/22 14:16:17</div>
<div style="position:absolute;left:232px;top:443px;width:38px;text-align:center;font-size:14px;line-height:16px;color:#333">7</div>
<div style="position:absolute;left:274px;top:443px;white-space:nowrap;font-size:14px;line-height:16px;color:#1c6b45;">Binary</div>
<div style="position:absolute;left:475px;top:443px;white-space:nowrap;font-size:14px;line-height:16px;color:#333;width:262px;overflow:hidden">vps<span style="font-family:'Liberation Sans',sans-serif;font-style:normal;font-size:17.3333px;line-height:0;letter-spacing:2.00px;vertical-align:-1px;-webkit-text-stroke:0.6px currentColor;">独立</span>ip(<span style="font-family:'Liberation Sans',sans-serif;font-style:normal;font-size:17.3333px;line-height:0;letter-spacing:2.00px;vertical-align:-1px;-webkit-text-stroke:0.6px currentColor;">独立</span>ip vps).txt</div>
<div style="position:absolute;left:746px;top:443px;white-space:nowrap;font-size:14px;line-height:16px;color:#333;">.txt</div>
<div style="position:absolute;left:941px;top:443px;width:196px;text-align:right;font-size:14px;line-height:16px;color:#333;font-style:italic">2024/4/13 17:57:52</div>
<div style="position:absolute;left:1142px;top:443px;width:196px;text-align:right;font-size:14px;line-height:16px;color:#333;font-style:italic">2024/1/1 7:45:11</div>
<div style="position:absolute;left:232px;top:470px;width:38px;text-align:center;font-size:14px;line-height:16px;color:#333">8</div>
<div style="position:absolute;left:274px;top:470px;white-space:nowrap;font-size:14px;line-height:16px;color:#1c6b45;">Binary</div>
<div style="position:absolute;left:475px;top:470px;white-space:nowrap;font-size:14px;line-height:16px;color:#333;width:262px;overflow:hidden">VPS<span style="font-family:'Liberation Sans',sans-serif;font-style:normal;font-size:17.3333px;line-height:0;letter-spacing:2.00px;vertical-align:-1px;-webkit-text-stroke:0.6px currentColor;">知识</span>vps<span style="font-family:'Liberation Sans',sans-serif;font-style:normal;font-size:17.3333px;line-height:0;letter-spacing:2.00px;vertical-align:-1px;-webkit-text-stroke:0.6px currentColor;">独立</span>ip.txt</div>
<div style="position:absolute;left:746px;top:470px;white-space:nowrap;font-size:14px;line-height:16px;color:#333;">.txt</div>
<div style="position:absolute;left:941px;top:470px;width:196px;text-align:right;font-size:14px;line-height:16px;color:#333;font-style:italic">2024/4/13 17:57:52</div>
<div style="position:absolute;left:1142px;top:470px;width:196px;text-align:right;font-size:14px;line-height:16px;color:#333;font-style:italic">2023/11/1 10:04:47</div>
<div style="position:absolute;left:232px;top:496px;width:38px;text-align:center;font-size:14px;line-height:16px;color:#333">9</div>
<div style="position:absolute;left:274px;top:496px;white-space:nowrap;font-size:14px;line-height:16px;color:#1c6b45;">Binary</div>
<div style="position:absolute;left:475px;top:496px;white-space:nowrap;font-size:14px;line-height:16px;color:#333;width:262px;overflow:hidden">VPS<span style="font-family:'Liberation Sans',sans-serif;font-style:normal;font-size:17.3333px;line-height:0;letter-spacing:2.00px;vertical-align:-1px;-webkit-text-stroke:0.6px currentColor;">知识独立</span>ip<span style="font-family:'Liberation Sans',sans-serif;font-style:normal;font-size:17.3333px;line-height:0;letter-spacing:2.00px;vertical-align:-1px;-webkit-text-stroke:0.6px currentColor;">的</span>vps(vps<span style="font-family:'Liberation Sans',sans-serif;font-style:normal;font-size:17.3333px;line-height:0;letter-spacing:2.00px;vertical-align:-1px;-webkit-text-stroke:0.6px currentColor;">分配独立</span>ip).txt</div>
<div style="position:absolute;left:746px;top:496px;white-space:nowrap;font-size:14px;line-height:16px;color:#333;">.txt</div>
<div style="position:absolute;left:941px;top:496px;width:196px;text-align:right;font-size:14px;line-height:16px;color:#333;font-style:italic">2024/4/13 17:57:52</div>
<div style="position:absolute;left:1142px;top:496px;width:196px;text-align:right;font-size:14px;line-height:16px;color:#333;font-style:italic">2023/11/1 10:16:35</div>
<div style="position:absolute;left:232px;top:522px;width:38px;text-align:center;font-size:14px;line-height:16px;color:#333">10</div>
<div style="position:absolute;left:274px;top:522px;white-space:nowrap;font-size:14px;line-height:16px;color:#1c6b45;">Binary</div>
<div style="position:absolute;left:475px;top:522px;white-space:nowrap;font-size:14px;line-height:16px;color:#333;width:262px;overflow:hidden">vps<span style="font-family:'Liberation Sans',sans-serif;font-style:normal;font-size:17.3333px;line-height:0;letter-spacing:2.00px;vertical-align:-1px;-webkit-text-stroke:0.6px currentColor;">静态云主机服务器租用</span>(vps<span style="font-family:'Liberation Sans',sans-serif;font-style:normal;font-size:17.3333px;line-height:0;letter-spacing:2.00px;vertical-align:-1px;-webkit-text-stroke:0.6px currentColor;">云主机</span>...</div>
<div style="position:absolute;left:746px;top:522px;white-space:nowrap;font-size:14px;line-height:16px;color:#333;">.txt</div>
<div style="position:absolute;left:941px;top:522px;width:196px;text-align:right;font-size:14px;line-height:16px;color:#333;font-style:italic">2024/4/13 17:57:52</div>
<div style="position:absolute;left:1142px;top:522px;width:196px;text-align:right;font-size:14px;line-height:16px;color:#333;font-style:italic">2023/12/30 17:11:52</div>
<div style="position:absolute;left:232px;top:549px;width:38px;text-align:center;font-size:14px;line-height:16px;color:#333">11</div>
<div style="position:absolute;left:274px;top:549px;white-space:nowrap;font-size:14px;line-height:16px;color:#1c6b45;">Binary</div>
<div style="position:absolute;left:475px;top:549px;white-space:nowrap;font-size:14px;line-height:16px;color:#333;width:262px;overflow:hidden"><span style="font-family:'Liberation Sans',sans-serif;font-style:normal;font-size:17.3333px;line-height:0;letter-spacing:2.00px;vertical-align:-1px;-webkit-text-stroke:0.6px currentColor;">中山云主机云服务器租用</span>(vps<span style="font-family:'Liberation Sans',sans-serif;font-style:normal;font-size:17.3333px;line-height:0;letter-spacing:2.00px;vertical-align:-1px;-webkit-text-stroke:0.6px currentColor;">云主机</span>...</div>
<div style="position:absolute;left:746px;top:549px;white-space:nowrap;font-size:14px;line-height:16px;color:#333;">.txt</div>
<div style="position:absolute;left:941px;top:549px;width:196px;text-align:right;font-size:14px;line-height:16px;color:#333;font-style:italic">2024/4/13 17:57:52</div>
<div style="position:absolute;left:1142px;top:549px;width:196px;text-align:right;font-size:14px;line-height:16px;color:#333;font-style:italic">2023/12/25 22:39:41</div>
<div style="position:absolute;left:232px;top:575px;width:38px;text-align:center;font-size:14px;line-height:16px;color:#333">12</div>
<div style="position:absolute;left:274px;top:575px;white-space:nowrap;font-size:14px;line-height:16px;color:#1c6b45;">Binary</div>
<div style="position:absolute;left:475px;top:575px;white-space:nowrap;font-size:14px;line-height:16px;color:#333;width:262px;overflow:hidden"><span style="font-family:'Liberation Sans',sans-serif;font-style:normal;font-size:17.3333px;line-height:0;letter-spacing:2.00px;vertical-align:-1px;-webkit-text-stroke:0.6px currentColor;">临沂</span>vps<span style="font-family:'Liberation Sans',sans-serif;font-style:normal;font-size:17.3333px;line-height:0;letter-spacing:2.00px;vertical-align:-1px;-webkit-text-stroke:0.6px currentColor;">云服务器租用</span>(vps<span style="font-family:'Liberation Sans',sans-serif;font-style:normal;font-size:17.3333px;line-height:0;letter-spacing:2.00px;vertical-align:-1px;-webkit-text-stroke:0.6px currentColor;">云主机服务</span>...</div>
<div style="position:absolute;left:746px;top:575px;white-space:nowrap;font-size:14px;line-height:16px;color:#333;">.txt</div>
<div style="position:absolute;left:941px;top:575px;width:196px;text-align:right;font-size:14px;line-height:16px;color:#333;font-style:italic">2024/4/13 17:57:52</div>
<div style="position:absolute;left:1142px;top:575px;width:196px;text-align:right;font-size:14px;line-height:16px;color:#333;font-style:italic">2023/12/21 11:37:06</div>
<div style="position:absolute;left:232px;top:601px;width:38px;text-align:center;font-size:14px;line-height:16px;color:#333">13</div>
<div style="position:absolute;left:274px;top:601px;white-space:nowrap;font-size:14px;line-height:16px;color:#1c6b45;">Binary</div>
<div style="position:absolute;left:475px;top:601px;white-space:nowrap;font-size:14px;line-height:16px;color:#333;width:262px;overflow:hidden"><span style="font-family:'Liberation Sans',sans-serif;font-style:normal;font-size:17.3333px;line-height:0;letter-spacing:2.00px;vertical-align:-1px;-webkit-text-stroke:0.6px currentColor;">丹东</span>vps<span style="font-family:'Liberation Sans',sans-serif;font-style:normal;font-size:17.3333px;line-height:0;letter-spacing:2.00px;vertical-align:-1px;-webkit-text-stroke:0.6px currentColor;">云服务器租用</span>(vps<span style="font-family:'Liberation Sans',sans-serif;font-style:normal;font-size:17.3333px;line-height:0;letter-spacing:2.00px;vertical-align:-1px;-webkit-text-stroke:0.6px currentColor;">云主机服务</span>...</div>
<div style="position:absolute;left:746px;top:601px;white-space:nowrap;font-size:14px;line-height:16px;color:#333;">.txt</div>
<div style="position:absolute;left:941px;top:601px;width:196px;text-align:right;font-size:14px;line-height:16px;color:#333;font-style:italic">2024/4/13 17:57:52</div>
<div style="position:absolute;left:1142px;top:601px;width:196px;text-align:right;font-size:14px;line-height:16px;color:#333;font-style:italic">2023/12/9 14:36:08</div>
<div style="position:absolute;left:232px;top:628px;width:38px;text-align:center;font-size:14px;line-height:16px;color:#333">14</div>
<div style="position:absolute;left:274px;top:628px;white-space:nowrap;font-size:14px;line-height:16px;color:#1c6b45;">Binary</div>
<div style="position:absolute;left:475px;top:628px;white-space:nowrap;font-size:14px;line-height:16px;color:#333;width:262px;overflow:hidden"><span style="font-family:'Liberation Sans',sans-serif;font-style:normal;font-size:17.3333px;line-height:0;letter-spacing:2.00px;vertical-align:-1px;-webkit-text-stroke:0.6px currentColor;">为什么要使用独立</span>ip<span style="font-family:'Liberation Sans',sans-serif;font-style:normal;font-size:17.3333px;line-height:0;letter-spacing:2.00px;vertical-align:-1px;-webkit-text-stroke:0.6px currentColor;">虚拟主机</span>.txt</div>
<div style="position:absolute;left:746px;top:628px;white-space:nowrap;font-size:14px;line-height:16px;color:#333;">.txt</div>
<div style="position:absolute;left:941px;top:628px;width:196px;text-align:right;font-size:14px;line-height:16px;color:#333;font-style:italic">2024/4/13 17:57:52</div>
<div style="position:absolute;left:1142px;top:628px;width:196px;text-align:right;font-size:14px;line-height:16px;color:#333;font-style:italic">2023/12/5 16:56:07</div>
<div style="position:absolute;left:232px;top:654px;width:38px;text-align:center;font-size:14px;line-height:16px;color:#333">15</div>
<div style="position:absolute;left:274px;top:654px;white-space:nowrap;font-size:14px;line-height:16px;color:#1c6b45;">Binary</div>
<div style="position:absolute;left:475px;top:654px;white-space:nowrap;font-size:14px;line-height:16px;color:#333;width:262px;overflow:hidden"><span style="font-family:'Liberation Sans',sans-serif;font-style:normal;font-size:17.3333px;line-height:0;letter-spacing:2.00px;vertical-align:-1px;-webkit-text-stroke:0.6px currentColor;">丽江</span>vps<span style="font-family:'Liberation Sans',sans-serif;font-style:normal;font-size:17.3333px;line-height:0;letter-spacing:2.00px;vertical-align:-1px;-webkit-text-stroke:0.6px currentColor;">云服务器租用</span>(vps<span style="font-family:'Liberation Sans',sans-serif;font-style:normal;font-size:17.3333px;line-height:0;letter-spacing:2.00px;vertical-align:-1px;-webkit-text-stroke:0.6px currentColor;">云主机服务</span>...</div>
<div style="position:absolute;left:746px;top:654px;white-space:nowrap;font-size:14px;line-height:16px;color:#333;">.txt</div>
<div style="position:absolute;left:941px;top:654px;width:196px;text-align:right;font-size:14px;line-height:16px;color:#333;font-style:italic">2024/4/13 17:57:52</div>
<div style="position:absolute;left:1142px;top:654px;width:196px;text-align:right;font-size:14px;line-height:16px;color:#333;font-style:italic">2023/12/11 8:31:30</div>
<div style="position:absolute;left:232px;top:680px;width:38px;text-align:center;font-size:14px;line-height:16px;color:#333">16</div>
<div style="position:absolute;left:274px;top:680px;white-space:nowrap;font-size:14px;line-height:16px;color:#1c6b45;">Binary</div>
<div style="position:absolute;left:475px;top:680px;white-space:nowrap;font-size:14px;line-height:16px;color:#333;width:262px;overflow:hidden"><span style="font-family:'Liberation Sans',sans-serif;font-style:normal;font-size:17.3333px;line-height:0;letter-spacing:2.00px;vertical-align:-1px;-webkit-text-stroke:0.6px currentColor;">云主机云服务器租用配置价格</span>(vps<span style="font-family:'Liberation Sans',sans-serif;font-style:normal;font-size:17.3333px;line-height:0;letter-spacing:2.00px;vertical-align:-1px;-webkit-text-stroke:0.6px currentColor;">云</span>...</div>
<div style="position:absolute;left:746px;top:680px;white-space:nowrap;font-size:14px;line-height:16px;color:#333;">.txt</div>
<div style="position:absolute;left:941px;top:680px;width:196px;text-align:right;font-size:14px;line-height:16px;color:#333;font-style:italic">2024/4/13 17:57:52</div>
<div style="position:absolute;left:1142px;top:680px;width:196px;text-align:right;font-size:14px;line-height:16px;color:#333;font-style:italic">2023/12/12 13:25:31</div>
<div style="position:absolute;left:232px;top:707px;width:38px;text-align:center;font-size:14px;line-height:16px;color:#333">17</div>
<div style="position:absolute;left:274px;top:707px;white-space:nowrap;font-size:14px;line-height:16px;color:#1c6b45;">Binary</div>
<div style="position:absolute;left:475px;top:707px;white-space:nowrap;font-size:14px;line-height:16px;color:#333;width:262px;overflow:hidden"><span style="font-family:'Liberation Sans',sans-serif;font-style:normal;font-size:17.3333px;line-height:0;letter-spacing:2.00px;vertical-align:-1px;-webkit-text-stroke:0.6px currentColor;">云主机和云服务器租用及托管</span>(vps<span style="font-family:'Liberation Sans',sans-serif;font-style:normal;font-size:17.3333px;line-height:0;letter-spacing:2.00px;vertical-align:-1px;-webkit-text-stroke:0.6px currentColor;">云</span>...</div>
<div style="position:absolute;left:746px;top:707px;white-space:nowrap;font-size:14px;line-height:16px;color:#333;">.txt</div>
<div style="position:absolute;left:941px;top:707px;width:196px;text-align:right;font-size:14px;line-height:16px;color:#333;font-style:italic">2024/4/13 17:57:52</div>
<div style="position:absolute;left:1142px;top:707px;width:196px;text-align:right;font-size:14px;line-height:16px;color:#333;font-style:italic">2023/12/23 9:31:49</div>
<div style="position:absolute;left:232px;top:733px;width:38px;text-align:center;font-size:14px;line-height:16px;color:#333">18</div>
<div style="position:absolute;left:274px;top:733px;white-space:nowrap;font-size:14px;line-height:16px;color:#1c6b45;">Binary</div>
<div style="position:absolute;left:475px;top:733px;white-space:nowrap;font-size:14px;line-height:16px;color:#333;width:262px;overflow:hidden"><span style="font-family:'Liberation Sans',sans-serif;font-style:normal;font-size:17.3333px;line-height:0;letter-spacing:2.00px;vertical-align:-1px;-webkit-text-stroke:0.6px currentColor;">云主机是独立</span>ip<span style="font-family:'Liberation Sans',sans-serif;font-style:normal;font-size:17.3333px;line-height:0;letter-spacing:2.00px;vertical-align:-1px;-webkit-text-stroke:0.6px currentColor;">吗</span>.txt</div>
<div style="position:absolute;left:746px;top:733px;white-space:nowrap;font-size:14px;line-height:16px;color:#333;">.txt</div>
<div style="position:absolute;left:941px;top:733px;width:196px;text-align:right;font-size:14px;line-height:16px;color:#333;font-style:italic">2024/4/13 17:57:52</div>
<div style="position:absolute;left:1142px;top:733px;width:196px;text-align:right;font-size:14px;line-height:16px;color:#333;font-style:italic">2023/11/22 14:22:31</div>
<div style="position:absolute;left:232px;top:759px;width:38px;text-align:center;font-size:14px;line-height:16px;color:#333">19</div>
<div style="position:absolute;left:274px;top:759px;white-space:nowrap;font-size:14px;line-height:16px;color:#1c6b45;">Binary</div>
<div style="position:absolute;left:475px;top:759px;white-space:nowrap;font-size:14px;line-height:16px;color:#333;width:262px;overflow:hidden"><span style="font-family:'Liberation Sans',sans-serif;font-style:normal;font-size:17.3333px;line-height:0;letter-spacing:2.00px;vertical-align:-1px;-webkit-text-stroke:0.6px currentColor;">云主机独立</span>ip<span style="font-family:'Liberation Sans',sans-serif;font-style:normal;font-size:17.3333px;line-height:0;letter-spacing:2.00px;vertical-align:-1px;-webkit-text-stroke:0.6px currentColor;">服务器租用</span>.txt</div>
<div style="position:absolute;left:746px;top:759px;white-space:nowrap;font-size:14px;line-height:16px;color:#333;">.txt</div>
<div style="position:absolute;left:941px;top:759px;width:196px;text-align:right;font-size:14px;line-height:16px;color:#333;font-style:italic">2024/4/13 17:57:52</div>
<div style="position:absolute;left:1142px;top:759px;width:196px;text-align:right;font-size:14px;line-height:16px;color:#333;font-style:italic">2023/11/22 14:15:07</div>
<div style="position:absolute;left:232px;top:786px;width:38px;text-align:center;font-size:14px;line-height:16px;color:#333">20</div>
<div style="position:absolute;left:274px;top:786px;white-space:nowrap;font-size:14px;line-height:16px;color:#1c6b45;">Binary</div>
<div style="position:absolute;left:475px;top:786px;white-space:nowrap;font-size:14px;line-height:16px;color:#333;width:262px;overflow:hidden"><span style="font-family:'Liberation Sans',sans-serif;font-style:normal;font-size:17.3333px;line-height:0;letter-spacing:2.00px;vertical-align:-1px;-webkit-text-stroke:0.6px currentColor;">云服务器</span>vps<span style="font-family:'Liberation Sans',sans-serif;font-style:normal;font-size:17.3333px;line-height:0;letter-spacing:2.00px;vertical-align:-1px;-webkit-text-stroke:0.6px currentColor;">独立</span>ip<span style="font-family:'Liberation Sans',sans-serif;font-style:normal;font-size:17.3333px;line-height:0;letter-spacing:2.00px;vertical-align:-1px;-webkit-text-stroke:0.6px currentColor;">吗</span>(<span style="font-family:'Liberation Sans',sans-serif;font-style:normal;font-size:17.3333px;line-height:0;letter-spacing:2.00px;vertical-align:-1px;-webkit-text-stroke:0.6px currentColor;">云服务器</span>vps<span style="font-family:'Liberation Sans',sans-serif;font-style:normal;font-size:17.3333px;line-height:0;letter-spacing:2.00px;vertical-align:-1px;-webkit-text-stroke:0.6px currentColor;">是</span>...</div>
<div style="position:absolute;left:746px;top:786px;white-space:nowrap;font-size:14px;line-height:16px;color:#333;">.txt</div>
<div style="position:absolute;left:941px;top:786px;width:196px;text-align:right;font-size:14px;line-height:16px;color:#333;font-style:italic">2024/4/13 17:57:52</div>
<div style="position:absolute;left:1142px;top:786px;width:196px;text-align:right;font-size:14px;line-height:16px;color:#333;font-style:italic">2023/11/22 14:15:07</div>
<div style="position:absolute;left:232px;top:247px;width:1px;height:541px;background:#dcdcdc"></div>
<svg style="position:absolute;left:239px;top:253px;" width="17" height="16" viewBox="0 0 17 16">
<rect x="0.6" y="0.6" width="15" height="14.5" fill="#fff" stroke="#6b6b6b" stroke-width="1.2"/>
<rect x="0" y="0" width="16.2" height="3.2" fill="#4677b4"/>
<path d="M0.6 7.3H15.6M0.6 11.2H15.6M5.6 3.2V15M10.6 3.2V15" stroke="#b6b6b6" stroke-width="1"/>
</svg>
<svg style="position:absolute;left:256px;top:264px;" width="8" height="5" viewBox="0 0 8 5"><path d="M0 0H8L4 4.5Z" fill="#6b6b6b"/></svg>
<svg style="position:absolute;left:273px;top:252px;" width="18" height="18" viewBox="0 0 18 18"><rect x="1" y="1" width="15.8" height="16" fill="#fff" stroke="#6e6e6e" stroke-width="1.6"/><path d="M5 6H13M5 10H13M5 14H13" stroke="#6e6e6e" stroke-width="1.2"/></svg>
<div style="position:absolute;left:300px;top:254px;font-size:13px;line-height:16px;font-weight:bold;color:#333">Content</div>
<div style="position:absolute;left:447px;top:251px;width:20px;height:20px;background:#f7f7f9;border:1px solid #a8a8a8;box-sizing:border-box"></div>
<svg style="position:absolute;left:448px;top:252px;" width="18" height="18" viewBox="0 0 18 18"><path d="M5.2 3V9.5M12.8 3V9.5" stroke="#555" stroke-width="1.1"/><path d="M2.6 8H7.8L5.2 11.2ZM10.2 8H15.4L12.8 11.2Z" fill="#555"/><path d="M2.5 13.5H15.5" stroke="#555" stroke-width="1.2"/></svg>
<svg style="position:absolute;left:472px;top:252px;" width="22" height="19" viewBox="0 0 22 19"><path d="M0.7 13.2L3.6 5.2L6.5 13.2M1.7 10.6H5.5" stroke="#4f4f4f" stroke-width="1.35" fill="none"/><path d="M8.7 1.7V8.9H11A1.85 1.85 0 0 0 11 5.2H8.7M8.7 1.7H10.8A1.75 1.75 0 0 1 10.8 5.2" stroke="#4f4f4f" stroke-width="1.25" fill="none"/><path d="M17.9 10.4A3.2 3.7 0 1 0 17.9 15.6" stroke="#4f4f4f" stroke-width="1.35" fill="none"/></svg>
<div style="position:absolute;left:502px;top:254px;font-size:13px;line-height:16px;font-weight:bold;color:#333">Name</div>
<div style="position:absolute;left:717px;top:251px;width:20px;height:20px;background:#fff;border:1px solid #a6a6a6;box-sizing:border-box"></div>
<svg style="position:absolute;left:722px;top:259px;" width="9" height="5" viewBox="0 0 9 5"><path d="M0 0H8.5L4.25 4.5Z" fill="#666"/></svg>
<svg style="position:absolute;left:743px;top:252px;" width="22" height="19" viewBox="0 0 22 19"><path d="M0.7 13.2L3.6 5.2L6.5 13.2M1.7 10.6H5.5" stroke="#4f4f4f" stroke-width="1.35" fill="none"/><path d="M8.7 1.7V8.9H11A1.85 1.85 0 0 0 11 5.2H8.7M8.7 1.7H10.8A1.75 1.75 0 0 1 10.8 5.2" stroke="#4f4f4f" stroke-width="1.25" fill="none"/><path d="M17.9 10.4A3.2 3.7 0 1 0 17.9 15.6" stroke="#4f4f4f" stroke-width="1.35" fill="none"/></svg>
<div style="position:absolute;left:771px;top:254px;font-size:13px;line-height:16px;font-weight:bold;color:#333">Extension</div>
<div style="position:absolute;left:918px;top:251px;width:20px;height:20px;background:#fff;border:1px solid #a6a6a6;box-sizing:border-box"></div>
<svg style="position:absolute;left:923px;top:259px;" width="9" height="5" viewBox="0 0 9 5"><path d="M0 0H8.5L4.25 4.5Z" fill="#666"/></svg>
<svg style="position:absolute;left:944px;top:250px;" width="22" height="21" viewBox="0 0 22 21">
<rect x="1" y="1.5" width="16" height="15" fill="#fff" stroke="#666" stroke-width="1.1"/>
<rect x="1" y="1" width="16" height="3.5" fill="#666"/>
<path d="M1 10H17M1 13.5H17M5 4.5V16.5M9 4.5V16.5M13 4.5V16.5" stroke="#bdbdbd" stroke-width=".9" stroke-dasharray="1.5 1.5"/>
<rect x="4.6" y="7.5" width="4.6" height="4.6" fill="#fff" stroke="#e07a1f" stroke-width="1.3"/>
<circle cx="15.5" cy="15.5" r="4.4" fill="#fff" stroke="#4b88c8" stroke-width="1.1"/>
<path d="M15 12.8V16H17.5" stroke="#555" stroke-width="1" fill="none"/>
</svg>
<div style="position:absolute;left:972px;top:254px;font-size:13px;line-height:16px;font-weight:bold;color:#333">Date accessed</div>
<div style="position:absolute;left:1119px;top:251px;width:20px;height:20px;background:#fff;border:1px solid #a6a6a6;box-sizing:border-box"></div>
<svg style="position:absolute;left:1124px;top:259px;" width="9" height="5" viewBox="0 0 9 5"><path d="M0 0H8.5L4.25 4.5Z" fill="#666"/></svg>
<svg style="position:absolute;left:1145px;top:250px;" width="22" height="21" viewBox="0 0 22 21">
<rect x="1" y="1.5" width="16" height="15" fill="#fff" stroke="#666" stroke-width="1.1"/>
<rect x="1" y="1" width="16" height="3.5" fill="#666"/>
<path d="M1 10H17M1 13.5H17M5 4.5V16.5M9 4.5V16.5M13 4.5V16.5" stroke="#bdbdbd" stroke-width=".9" stroke-dasharray="1.5 1.5"/>
<rect x="4.6" y="7.5" width="4.6" height="4.6" fill="#fff" stroke="#e07a1f" stroke-width="1.3"/>
<circle cx="15.5" cy="15.5" r="4.4" fill="#fff" stroke="#4b88c8" stroke-width="1.1"/>
<path d="M15 12.8V16H17.5" stroke="#555" stroke-width="1" fill="none"/>
</svg>
<div style="position:absolute;left:1173px;top:254px;font-size:13px;line-height:16px;font-weight:bold;color:#333">Date modified</div>
<div style="position:absolute;left:1320px;top:251px;width:20px;height:20px;background:#fff;border:1px solid #a6a6a6;box-sizing:border-box"></div>
<svg style="position:absolute;left:1325px;top:259px;" width="9" height="5" viewBox="0 0 9 5"><path d="M0 0H8.5L4.25 4.5Z" fill="#666"/></svg>
<svg style="position:absolute;left:1346px;top:250px;" width="22" height="21" viewBox="0 0 22 21">
<rect x="1" y="1.5" width="16" height="15" fill="#fff" stroke="#666" stroke-width="1.1"/>
<rect x="1" y="1" width="16" height="3.5" fill="#666"/>
<path d="M1 10H17M1 13.5H17M5 4.5V16.5M9 4.5V16.5M13 4.5V16.5" stroke="#bdbdbd" stroke-width=".9" stroke-dasharray="1.5 1.5"/>
<rect x="4.6" y="7.5" width="4.6" height="4.6" fill="#fff" stroke="#e07a1f" stroke-width="1.3"/>
<circle cx="15.5" cy="15.5" r="4.4" fill="#fff" stroke="#4b88c8" stroke-width="1.1"/>
<path d="M15 12.8V16H17.5" stroke="#555" stroke-width="1" fill="none"/>
</svg>
<div style="position:absolute;left:1375px;top:254px;width:6px;overflow:hidden;font-size:13px;line-height:16px;font-weight:bold;color:#333">D</div>
<div style="position:absolute;left:1381px;top:243px;width:5px;height:545px;background:#fff"></div>
<div style="position:absolute;left:1360px;top:279px;width:21px;height:509px;background:#f0f0f0"></div>
<svg style="position:absolute;left:1362px;top:297px;" width="17" height="16" viewBox="0 0 17 16"><path d="M1.8 13.5L8.5 5.2L15.2 13.5" stroke="#5c5c5c" stroke-width="3.4" fill="none"/></svg>
<div style="position:absolute;left:1361px;top:322px;width:19px;height:250px;background:#c8c8c8"></div>
<svg style="position:absolute;left:415px;top:236px;" width="80" height="60" viewBox="0 0 80 60"><ellipse cx="37" cy="29.5" rx="26.9" ry="19.6" fill="none" stroke="#fb3535" stroke-width="6.8"/></svg>
<svg style="position:absolute;left:430px;top:285px;" width="310" height="345" viewBox="0 0 310 345"><path d="M9 9 L32 18.3 L28.2 22.5 L299 333.5 L297.5 334 L20.2 29.3 L16 32.7 Z" fill="#fb3535"/></svg>
<div style="position:absolute;left:0;top:0;width:1398px;height:800px;border-left:1px solid #b9b9b9;border-top:1px solid #c4c4c4;border-top-left-radius:8px;box-sizing:border-box"></div>
</body></html>
